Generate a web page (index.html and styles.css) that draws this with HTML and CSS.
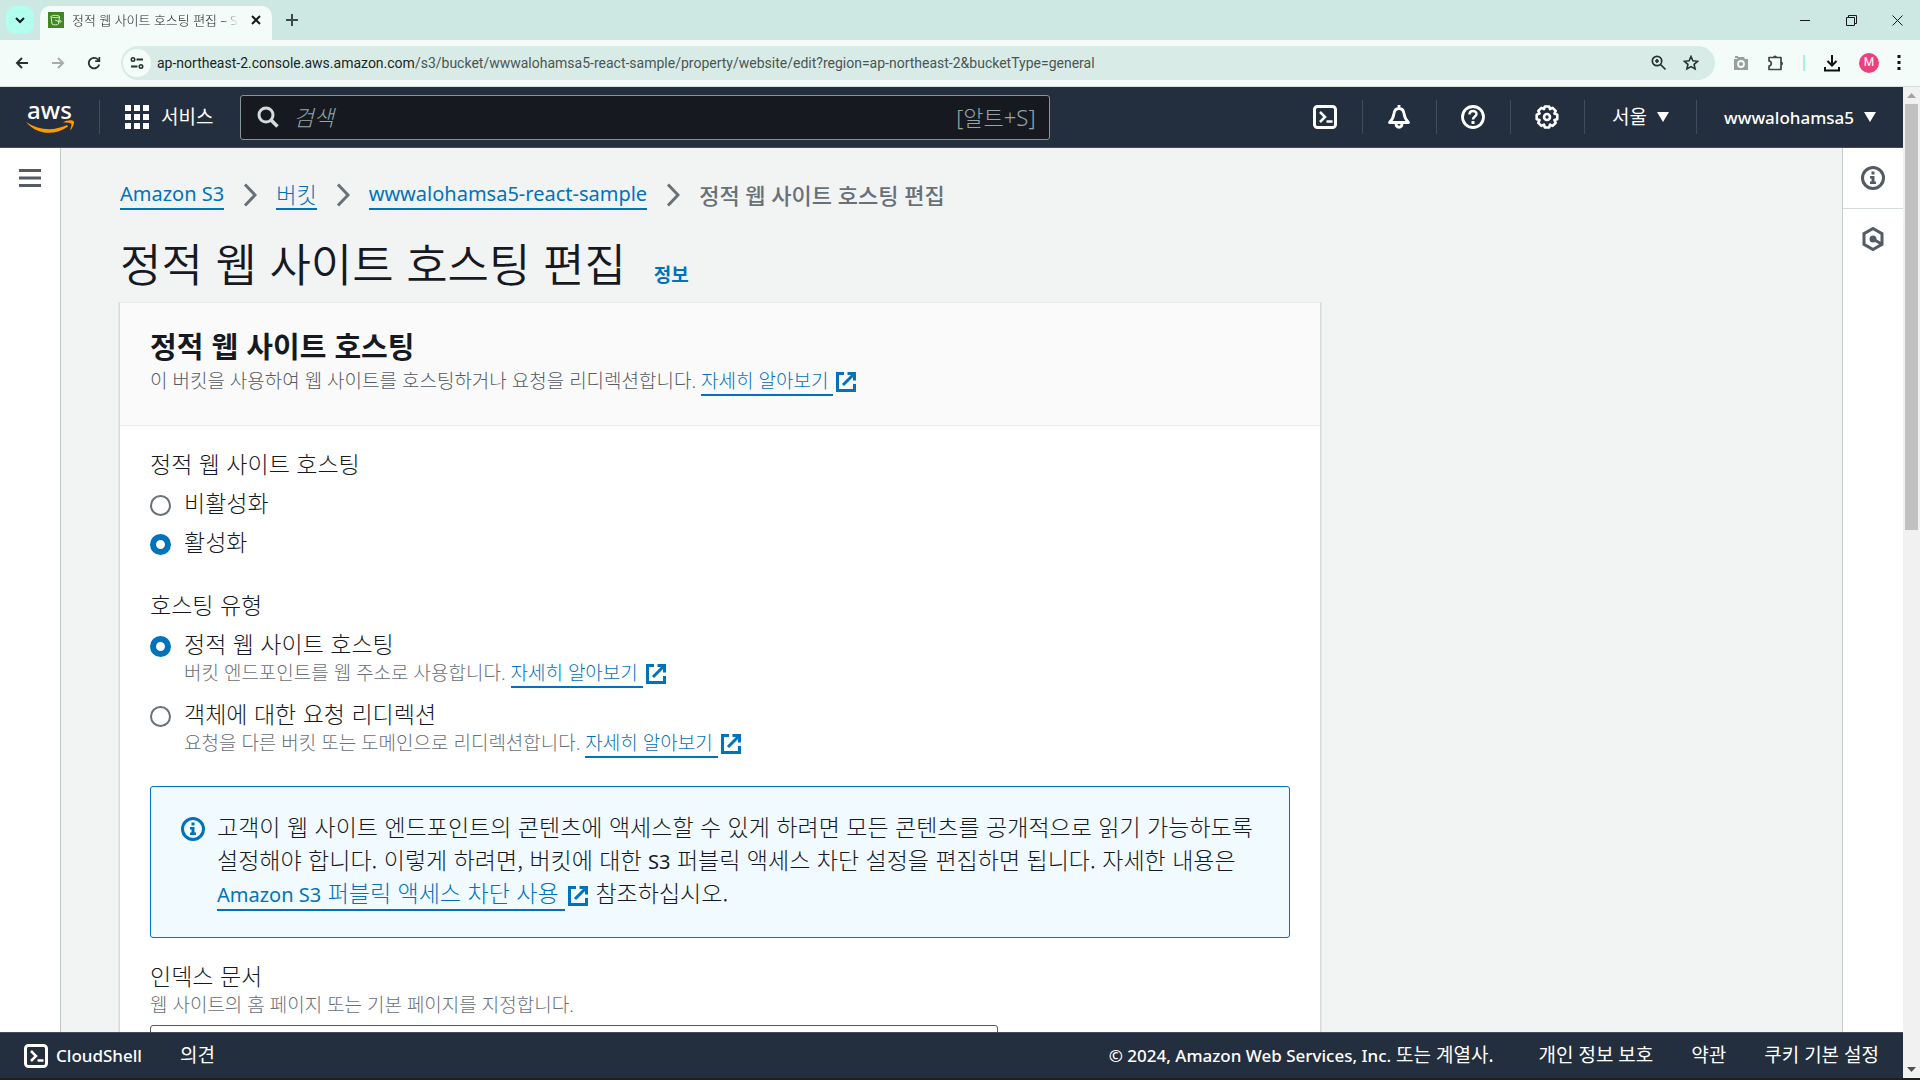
FILE: index.html
```html
<!DOCTYPE html>
<html lang="ko">
<head>
    <meta charset="UTF-8">
    <meta name="viewport" content="width=device-width, initial-scale=1.0">
    <title>정적 웹 사이트 호스팅 편집 – S3</title>
    <link rel="stylesheet" href="styles.css">
</head>
<body>

<!-- Icons used more than once -->
<svg class="icon-defs" aria-hidden="true">
    <symbol id="icon-external" viewBox="0 0 22 22">
        <path d="M9 2.500H2.500V19.500H19.500V13" fill="none" stroke="currentColor" stroke-width="3"/>
        <path d="M8 14L18.500 3.500" fill="none" stroke="currentColor" stroke-width="3"/>
        <path d="M12.500 2.500H19.500V9.500" fill="none" stroke="currentColor" stroke-width="3"/>
    </symbol>
    <symbol id="icon-info" viewBox="0 0 24 24">
        <circle cx="12" cy="12" r="10.500" fill="none" stroke="currentColor" stroke-width="3"/>
        <path d="M10.500 5.500h3v3h-3zM9 10h4.500v5.500H15V18H9v-2.500h1.500v-3H9z" fill="currentColor"/>
    </symbol>
    <symbol id="icon-shell" viewBox="0 0 24 24">
        <rect x="1.500" y="1.500" width="21" height="21" rx="3" fill="none" stroke="currentColor" stroke-width="3"/>
        <path d="M7 7l5 5-5 5M13.500 16.500h6" fill="none" stroke="currentColor" stroke-width="2.500"/>
    </symbol>
    <symbol id="icon-chevron" viewBox="0 0 14 24">
        <path d="M2 1.500L12 12 2 22.500" fill="none" stroke="currentColor" stroke-width="3"/>
    </symbol>
    <symbol id="icon-caret" viewBox="0 0 12 10">
        <path d="M0 0h12L6 10z" fill="currentColor"/>
    </symbol>
</svg>

<!-- Browser tab strip -->
<div class="titlebar">
    <button class="tab-search" aria-label="탭 검색">
        <svg width="10" height="10" viewBox="0 0 10 10"><path d="M1 3l4 4 4-4" fill="none" stroke="currentColor" stroke-width="2"/></svg>
    </button>
    <div class="tab">
        <svg class="favicon" viewBox="0 0 16 16">
            <rect width="16" height="16" fill="#3f8624"/>
            <path d="M3 4.500C3 3 11.500 3 11.500 4.500L10.500 12c-.5 1.200-6 1.200-6.500 0zM3 4.500C3.500 6 11 6 11.500 4.500M7 8l5.500 2.200c1.500.2 1-1.300-1.200-2" fill="none" stroke="#d7f0cc" stroke-width="1"/>
        </svg>
        <span class="tab-title">정적 웹 사이트 호스팅 편집 – S3</span>
        <button class="tab-close" aria-label="탭 닫기">
            <svg width="10" height="10" viewBox="0 0 10 10"><path d="M1 1l8 8M9 1L1 9" stroke="currentColor" stroke-width="2"/></svg>
        </button>
    </div>
    <button class="tab-new" aria-label="새 탭">
        <svg width="12" height="12" viewBox="0 0 12 12"><path d="M6 0v12M0 6h12" stroke="currentColor" stroke-width="2"/></svg>
    </button>
    <div class="window-controls">
        <button aria-label="최소화"><svg width="10" height="10" viewBox="0 0 10 10"><path d="M0 5.500h10" stroke="currentColor"/></svg></button>
        <button aria-label="창 복원"><svg width="11" height="11" viewBox="0 0 11 11"><path d="M.5 2.500h8v8h-8zM2.500 2.500v-2h8v8h-2" fill="none" stroke="currentColor"/></svg></button>
        <button aria-label="닫기"><svg width="11" height="11" viewBox="0 0 11 11"><path d="M.5.5l10 10M10.500.5l-10 10" stroke="currentColor"/></svg></button>
    </div>
</div>

<!-- Browser toolbar -->
<div class="toolbar">
    <div class="toolbar-nav">
        <button aria-label="뒤로"><svg width="14" height="14" viewBox="0 0 14 14"><path d="M13 7H2M7 2L2 7l5 5" fill="none" stroke="currentColor" stroke-width="2"/></svg></button>
        <button aria-label="앞으로" disabled><svg width="14" height="14" viewBox="0 0 14 14"><path d="M1 7h11M7 2l5 5-5 5" fill="none" stroke="currentColor" stroke-width="2"/></svg></button>
        <button aria-label="새로고침"><svg width="14" height="14" viewBox="0 0 14 14"><path d="M12.200 8.500A5.300 5.300 0 1 1 11 3.500l1.500 1.500" fill="none" stroke="currentColor" stroke-width="1.800"/><path d="M13.200 1v5H8.200V4.300h3.300V1z" fill="currentColor"/></svg></button>
    </div>
    <div class="address">
        <button class="site-info" aria-label="사이트 정보">
            <svg width="14" height="12" viewBox="0 0 14 12"><circle cx="3" cy="2.500" r="1.700" fill="none" stroke="currentColor" stroke-width="1.600"/><path d="M6.500 2.500H13M1 9.500h6.500" stroke="currentColor" stroke-width="2"/><circle cx="11" cy="9.500" r="1.700" fill="none" stroke="currentColor" stroke-width="1.600"/></svg>
        </button>
        <div class="url"><span class="url-host">ap-northeast-2.console.aws.amazon.com</span>/s3/bucket/wwwalohamsa5-react-sample/property/website/edit?region=ap-northeast-2&amp;bucketType=general</div>
        <button aria-label="확대/축소"><svg width="16" height="16" viewBox="0 0 16 16"><circle cx="6" cy="6" r="4.700" fill="none" stroke="currentColor" stroke-width="1.700"/><path d="M9.500 9.500l5 5M6 4v4M4 6h4" stroke="currentColor" stroke-width="1.700"/></svg></button>
        <button aria-label="북마크"><svg width="16" height="16" viewBox="0 0 16 16"><path d="M8 1.500l1.900 4.300 4.700.5-3.500 3.100 1 4.600L8 11.600 3.900 14l1-4.600L1.400 6.300l4.700-.5z" fill="none" stroke="currentColor" stroke-width="1.600"/></svg></button>
    </div>
    <div class="toolbar-actions">
        <button class="muted" aria-label="화면 캡처"><svg width="16" height="16" viewBox="0 0 16 16"><path d="M1 4h3l1-2h6l1 2h3v11H1zM2 1h3v2H2z" fill="currentColor"/><circle cx="8" cy="9" r="3" fill="currentColor" stroke="#f3fcf9" stroke-width="1.800"/></svg></button>
        <button aria-label="확장 프로그램"><svg class="puzzle" width="18" height="18" viewBox="0 0 18 18"><path d="M2 3.500h12V15.500H2V12.200q2.300-.5 2.300-2.700T2 7z" fill="none" stroke="currentColor" stroke-width="1.700" stroke-linejoin="round"/><path d="M6 3.500a2 2 0 0 1 4 0zM14 7.500a2 2 0 0 1 0 4z" fill="currentColor"/></svg></button>
        <span class="toolbar-sep"></span>
        <button aria-label="다운로드"><svg width="18" height="18" viewBox="0 0 18 18"><path d="M9 1v10M4.500 7L9 11.500 13.500 7M2 13v3.500h14V13" fill="none" stroke="currentColor" stroke-width="2"/></svg></button>
        <button class="avatar" aria-label="프로필">M</button>
        <button aria-label="메뉴"><svg width="4" height="16" viewBox="0 0 4 16"><path d="M.5 0h3v3h-3zM.5 6h3v3h-3zM.5 12h3v3h-3z" fill="currentColor"/></svg></button>
    </div>
</div>

<div class="viewport">
    <div class="app">
        <header class="aws-header">
            <a class="aws-logo" href="#">
                <span>aws</span>
                <svg width="48" height="14" viewBox="0 0 48 14"><path d="M0 2c14 9 28 9 41 3l1 1.500C29 16 11 15 0 2zM37 2.500c3-2.500 9-3 10.500-1.500s-1 7.500-3.500 9.500c1-3 2-6 1-7s-4-1-8-1z" fill="#ff9900"/></svg>
            </a>
            <button class="services">
                <svg width="24" height="24" viewBox="0 0 24 24"><path d="M0 0h6v6H0zM9 0h6v6H9zM18 0h6v6h-6zM0 9h6v6H0zM9 9h6v6H9zM18 9h6v6h-6zM0 18h6v6H0zM9 18h6v6H9zM18 18h6v6h-6z" fill="currentColor"/></svg>
                서비스
            </button>
            <div class="search">
                <svg width="22" height="22" viewBox="0 0 22 22"><circle cx="9" cy="9" r="7" fill="none" stroke="currentColor" stroke-width="3"/><path d="M14 14l6.500 6.500" stroke="currentColor" stroke-width="3.500"/></svg>
                <input type="search" placeholder="검색" aria-label="검색">
                <span class="shortcut">[알트+S]</span>
            </div>
            <nav class="header-nav">
                <button class="header-icon" aria-label="CloudShell"><svg width="24" height="24"><use href="#icon-shell"/></svg></button>
                <button class="header-icon" aria-label="알림"><svg width="24" height="24" viewBox="0 0 24 24"><path d="M12 0v3M2.500 17.500C6 14 6.500 12 7 8.500c.5-3.500 2.500-5 5-5s4.500 1.500 5 5c.5 3.500 1 5.500 4.500 9zM9 18.500c0 5 6 5 6 0" fill="none" stroke="currentColor" stroke-width="2.800" stroke-linejoin="round"/></svg></button>
                <button class="header-icon" aria-label="도움말"><svg width="24" height="24" viewBox="0 0 24 24"><circle cx="12" cy="12" r="10.500" fill="none" stroke="currentColor" stroke-width="2.800"/><path d="M8.500 9.500C8.500 5 15.500 5 15.500 9c0 2.500-3.500 2.500-3.500 5.500" fill="none" stroke="currentColor" stroke-width="2.500"/><path d="M10.500 16h3v3h-3z" fill="currentColor"/></svg></button>
                <button class="header-icon" aria-label="설정"><svg width="24" height="24" viewBox="0 0 24 24"><path d="M9.800 1.500h4.400l.8 2.700 2.600-1.300 3.100 3.100-1.300 2.600 2.900 1.200v4.400l-2.900.8 1.300 2.800-3.100 3.100-2.600-1.300-.8 2.900H9.800L9 19.600l-2.600 1.300-3.100-3.100L4.600 15l-2.900-.8V9.800l2.900-1.200L3.300 6l3.100-3.100L9 4.200z" fill="none" stroke="currentColor" stroke-width="2.600" stroke-linejoin="round"/><circle cx="12" cy="12" r="3" fill="none" stroke="currentColor" stroke-width="2.600"/></svg></button>
                <button class="header-menu">서울 <svg width="12" height="10"><use href="#icon-caret"/></svg></button>
                <button class="header-menu account">wwwalohamsa5 <svg width="12" height="10"><use href="#icon-caret"/></svg></button>
            </nav>
        </header>

        <div class="layout">
            <aside class="rail rail-left">
                <button aria-label="탐색 열기"><svg width="22" height="20" viewBox="0 0 22 20"><path d="M0 2.500h22M0 10h22M0 17.500h22" stroke="currentColor" stroke-width="3"/></svg></button>
            </aside>

            <main class="content">
                <nav class="breadcrumb">
                    <a href="#" class="latin">Amazon S3</a>
                    <svg width="14" height="24"><use href="#icon-chevron"/></svg>
                    <a href="#">버킷</a>
                    <svg width="14" height="24"><use href="#icon-chevron"/></svg>
                    <a href="#" class="latin">wwwalohamsa5-react-sample</a>
                    <svg width="14" height="24"><use href="#icon-chevron"/></svg>
                    <span class="current">정적 웹 사이트 호스팅 편집</span>
                </nav>

                <div class="page-title">
                    <h1>정적 웹 사이트 호스팅 편집</h1>
                    <a href="#">정보</a>
                </div>

                <section class="card">
                    <div class="card-header">
                        <h2>정적 웹 사이트 호스팅</h2>
                        <p>이 버킷을 사용하여 웹 사이트를 호스팅하거나 요청을 리디렉션합니다. <a class="external" href="#">자세히 알아보기 </a><svg class="ext" width="22" height="22"><use href="#icon-external"/></svg></p>
                    </div>
                    <form class="card-body">
                        <fieldset>
                            <legend>정적 웹 사이트 호스팅</legend>
                            <div class="option">
                                <input type="radio" name="hosting" id="hosting-off">
                                <label for="hosting-off">비활성화</label>
                            </div>
                            <div class="option">
                                <input type="radio" name="hosting" id="hosting-on" checked>
                                <label for="hosting-on">활성화</label>
                            </div>
                        </fieldset>

                        <fieldset>
                            <legend>호스팅 유형</legend>
                            <div class="option">
                                <input type="radio" name="type" id="type-static" checked>
                                <label for="type-static">정적 웹 사이트 호스팅</label>
                                <p class="hint">버킷 엔드포인트를 웹 주소로 사용합니다. <a class="external" href="#">자세히 알아보기 </a><svg class="ext" width="22" height="22"><use href="#icon-external"/></svg></p>
                            </div>
                            <div class="option">
                                <input type="radio" name="type" id="type-redirect">
                                <label for="type-redirect">객체에 대한 요청 리디렉션</label>
                                <p class="hint">요청을 다른 버킷 또는 도메인으로 리디렉션합니다. <a class="external" href="#">자세히 알아보기 </a><svg class="ext" width="22" height="22"><use href="#icon-external"/></svg></p>
                            </div>
                        </fieldset>

                        <div class="alert">
                            <svg width="24" height="24"><use href="#icon-info"/></svg>
                            <p>고객이 웹 사이트 엔드포인트의 콘텐츠에 액세스할 수 있게 하려면 모든 콘텐츠를 공개적으로 읽기 가능하도록 설정해야 합니다. 이렇게 하려면, 버킷에 대한 <span class="latin">S3</span> 퍼블릭 액세스 차단 설정을 편집하면 됩니다. 자세한 내용은 <a class="external" href="#"><span class="latin">Amazon S3</span> 퍼블릭 액세스 차단 사용 </a><svg class="ext" width="22" height="22"><use href="#icon-external"/></svg> 참조하십시오.</p>
                        </div>

                        <div class="field">
                            <label for="index-doc">인덱스 문서</label>
                            <p class="hint">웹 사이트의 홈 페이지 또는 기본 페이지를 지정합니다.</p>
                            <input type="text" id="index-doc">
                        </div>
                    </form>
                </section>
            </main>

            <aside class="rail rail-right">
                <button aria-label="정보"><svg width="24" height="24"><use href="#icon-info"/></svg></button>
                <button aria-label="도구"><svg width="24" height="24" viewBox="0 0 24 24"><path d="M12 1.500l9 5.200v10.600l-9 5.200-9-5.200V6.700z" fill="none" stroke="currentColor" stroke-width="3"/><circle cx="12" cy="12" r="3.500" fill="currentColor"/><path d="M12 12l8.500 5" stroke="currentColor" stroke-width="3"/></svg></button>
            </aside>
        </div>

        <footer class="aws-footer">
            <button class="cloudshell"><svg width="24" height="24"><use href="#icon-shell"/></svg>CloudShell</button>
            <a href="#">의견</a>
            <p class="copyright"><span class="latin">© 2024, Amazon Web Services, Inc.</span> 또는 계열사.</p>
            <a href="#">개인 정보 보호</a>
            <a href="#">약관</a>
            <a href="#">쿠키 기본 설정</a>
        </footer>
    </div>
    <div class="scrollbar">
        <svg width="9" height="5" viewBox="0 0 9 5"><path d="M0 5h9L4.500 0z" fill="#a3a3a3"/></svg>
        <div class="thumb"></div>
        <svg width="9" height="5" viewBox="0 0 9 5"><path d="M0 0h9L4.500 5z" fill="#505050"/></svg>
    </div>
</div>
<div class="taskbar-edge"></div>

</body>
</html>
```

FILE: styles.css
```css
* {
    box-sizing: border-box;
}
body {
    margin: 0;
    height: 100vh;
    display: flex;
    flex-direction: column;
    overflow: hidden;
    font-family: "Noto Sans", "Noto Sans CJK KR", sans-serif;
    font-size: 22px;
    font-weight: 300;
    line-height: 33px;
    color: #16191f;
    background: #f2f3f3;
}
button {
    display: flex;
    align-items: center;
    justify-content: center;
    padding: 0;
    border: none;
    background: none;
    font: inherit;
    color: inherit;
    cursor: pointer;
}
h1, h2, p {
    margin: 0;
}
a {
    color: #0073bb;
    text-decoration: none;
}
svg {
    flex: none;
}
.icon-defs {
    position: absolute;
    width: 0;
    height: 0;
}
.latin {
    font-family: "Noto Sans", sans-serif;
    font-size: 20px;
    font-weight: 400;
    line-height: 20px;
}

/* Browser tab strip */
.titlebar {
    display: flex;
    align-items: center;
    height: 40px;
    padding-left: 6px;
    background: #cde8e2;
}
.tab-search {
    width: 28px;
    height: 28px;
    border-radius: 10px;
    background: #b2fff0;
}
.tab {
    display: flex;
    align-items: center;
    align-self: flex-end;
    width: 232px;
    height: 34px;
    margin-left: 6px;
    padding: 0 11px 6px 8px;
    border-radius: 10px 10px 0 0;
    background: #f3fcf9;
}
.favicon {
    width: 16px;
    height: 16px;
}
.tab-title {
    flex: 1;
    margin: 0 12px 0 8px;
    overflow: hidden;
    white-space: nowrap;
    font-size: 13px;
    line-height: 20px;
    mask-image: linear-gradient(to right, #000 90%, transparent);
}
.tab-new {
    margin-left: 14px;
    color: #3c4a47;
}
.window-controls {
    display: flex;
    margin-left: auto;
}
.window-controls button {
    width: 46px;
    height: 40px;
}

/* Browser toolbar */
.toolbar {
    display: flex;
    align-items: center;
    height: 47px;
    padding: 0 19px 1px 15px;
    border-bottom: 1px solid #d5dfdc;
    background: #f3fcf9;
    color: #27332f;
}
.toolbar-nav {
    display: flex;
    gap: 22px;
    margin-right: 20px;
}
.toolbar-nav button:disabled {
    color: #a3aeab;
}
.address {
    display: flex;
    flex: 1;
    align-items: center;
    gap: 16px;
    height: 34px;
    padding: 0 16px 0 2px;
    border-radius: 17px;
    background: #d9ebe7;
}
.site-info {
    width: 28px;
    height: 28px;
    border-radius: 50%;
    background: #f3fcf9;
}
.url {
    flex: 1;
    margin-left: -10px;
    overflow: hidden;
    white-space: nowrap;
    font-family: Roboto, sans-serif;
    font-size: 14px;
    font-weight: 400;
    line-height: 20px;
    color: #4a5653;
}
.url-host {
    color: #1c2624;
}
.toolbar-actions {
    display: flex;
    align-items: center;
    gap: 18px;
    margin-left: 18px;
    color: #111;
}
.toolbar-actions .muted {
    color: #96a09d;
}
.puzzle {
    color: #3c4a47;
}
.toolbar-sep {
    width: 2px;
    height: 16px;
    background: #a5f3e4;
}
.avatar {
    width: 20px;
    height: 20px;
    border-radius: 50%;
    background: #ec407a;
    color: #fff;
    font-family: Roboto, sans-serif;
    font-size: 12px;
    font-weight: 400;
}

/* Page area */
.viewport {
    display: flex;
    flex: 1;
    min-height: 0;
}
.app {
    display: flex;
    flex: 1;
    flex-direction: column;
    min-width: 0;
}
.scrollbar {
    display: flex;
    flex-direction: column;
    align-items: center;
    width: 17px;
    padding: 6px 0;
    background: #f1f1f1;
}
.thumb {
    width: 13px;
    height: 426px;
    margin: 6px 0 auto;
    background: #c1c1c1;
}
.taskbar-edge {
    height: 2px;
    background: #1b2023;
}

/* AWS header */
.aws-header {
    display: flex;
    align-items: center;
    height: 61px;
    padding-left: 26px;
    border-bottom: 1px solid #414d5c;
    background: #232f3e;
    color: #fff;
    font-size: 19px;
}
.aws-logo {
    display: flex;
    flex-direction: column;
    align-items: center;
    width: 74px;
    padding-right: 26px;
    border-right: 1px solid #414d5c;
    color: #fff;
    font-size: 24px;
    font-weight: 500;
    line-height: 20px;
}
.services {
    gap: 12px;
    margin-left: 25px;
    font-weight: 400;
}
.search {
    display: flex;
    align-items: center;
    gap: 14px;
    width: 810px;
    height: 45px;
    margin-left: 27px;
    padding: 0 14px 0 16px;
    border: 1px solid #879596;
    border-radius: 3px;
    background: #161a20;
    color: #d5dbdb;
}
.search input {
    flex: 1;
    min-width: 0;
    padding: 0;
    border: none;
    outline: none;
    background: none;
    color: #fff;
    font: inherit;
    font-size: 22px;
    font-style: italic;
}
.search input::placeholder {
    color: #95a5a6;
}
.shortcut {
    color: #95a5a6;
    font-size: 22px;
}
.header-nav {
    display: flex;
    margin-left: auto;
}
.header-nav button {
    height: 34px;
}
.header-nav button + button {
    border-left: 1px solid #414d5c;
}
.header-icon {
    width: 74px;
}
.header-menu {
    gap: 10px;
    padding: 0 27px;
    font-weight: 400;
}
.account {
    font-size: 17px;
    font-weight: 500;
}

/* Console layout */
.layout {
    display: flex;
    flex: 1;
    min-height: 0;
}
.rail {
    flex: none;
    width: 61px;
    background: #fff;
    color: #545b64;
}
.rail button {
    width: 100%;
    height: 60px;
}
.rail-left {
    border-right: 1px solid #c5caca;
}
.rail-right {
    border-left: 1px solid #c5caca;
}
.rail-right button + button {
    border-top: 1px solid #d5dbdb;
}
.content {
    flex: 1;
    min-width: 0;
    overflow: hidden;
    padding: 29px 59px 0;
}
.breadcrumb {
    display: flex;
    align-items: center;
    gap: 19px;
    height: 36px;
    color: #687078;
}
.breadcrumb a {
    line-height: 28px;
    border-bottom: 2px solid #0073bb;
}
.current {
    font-weight: 500;
}
.page-title {
    display: flex;
    align-items: baseline;
    gap: 28px;
    height: 89px;
    padding-top: 20px;
    font-family: "Noto Sans CJK KR", sans-serif;
}
.page-title h1 {
    font-size: 45px;
    font-weight: 350;
    line-height: 60px;
}
.page-title a {
    font-size: 19px;
    font-weight: 700;
}

/* Card */
.card {
    max-width: 1202px;
    margin-left: -1px;
    border: 1px solid #d5dbdb;
    border-top-color: #eaeded;
    background: #fff;
    box-shadow: 0 1px 1px rgba(0, 28, 36, 0.3);
}
.card-header {
    padding: 24px 30px 26px;
    border-bottom: 1px solid #eaeded;
    background: #fafafa;
    color: #545b64;
}
.card-header h2 {
    color: #16191f;
    font-family: "Noto Sans CJK KR", sans-serif;
    font-size: 29px;
    font-weight: 700;
    line-height: 36px;
}
.card-header p {
    font-size: 19px;
    line-height: 36px;
}
.card-body {
    padding: 21px 30px;
    font-family: "Noto Sans CJK KR", sans-serif;
    font-size: 23px;
}
.external {
    border-bottom: 2px solid #0073bb;
    white-space: pre-wrap;
}
.ext {
    margin-left: 2px;
    color: #0073bb;
    vertical-align: -5px;
}
fieldset {
    margin: 0 0 30px;
    padding: 0;
    border: none;
}
legend {
    margin-bottom: 6px;
    padding: 0;
}
.option {
    display: grid;
    grid-template-columns: 21px 1fr;
    column-gap: 13px;
    align-items: center;
}
.option + .option {
    margin-top: 6px;
}
.option:has(.hint) + .option {
    margin-top: 11px;
}
.option input {
    appearance: none;
    width: 21px;
    height: 21px;
    margin: 5px 0 0;
    border: 2px solid #687078;
    border-radius: 50%;
    background: #fff;
}
.option input:checked {
    border: 6px solid #0073bb;
}
.hint {
    grid-column: 2;
    color: #687078;
    font-family: "Noto Sans", "Noto Sans CJK KR", sans-serif;
    font-size: 19px;
    line-height: 26px;
}
.alert {
    display: flex;
    gap: 12px;
    margin-bottom: 21px;
    padding: 23px 30px 28px;
    border: 1px solid #0073bb;
    border-radius: 3px;
    background: #f1faff;
    word-break: keep-all;
}
.alert > svg {
    margin-top: 7px;
    color: #0073bb;
}
.alert .external {
    line-height: 24px;
}
.field label {
    display: block;
}
.field input {
    width: 848px;
    max-width: 100%;
    height: 48px;
    margin-top: 7px;
    padding: 0 12px;
    border: 1px solid #545b64;
    border-radius: 3px;
    background: #fff;
    font: inherit;
}

/* AWS footer */
.aws-footer {
    display: flex;
    align-items: center;
    gap: 38px;
    height: 46px;
    padding: 0 24px;
    border-top: 1px solid #414d5c;
    background: #232f3e;
    color: #fff;
    font-size: 19px;
    font-weight: 400;
}
.aws-footer a {
    color: #fff;
}
.cloudshell {
    gap: 8px;
    font-size: 17px;
    font-weight: 500;
}
.copyright {
    margin-left: auto;
    margin-right: 7px;
}
.copyright .latin {
    font-size: 17px;
    font-weight: 500;
}
```
